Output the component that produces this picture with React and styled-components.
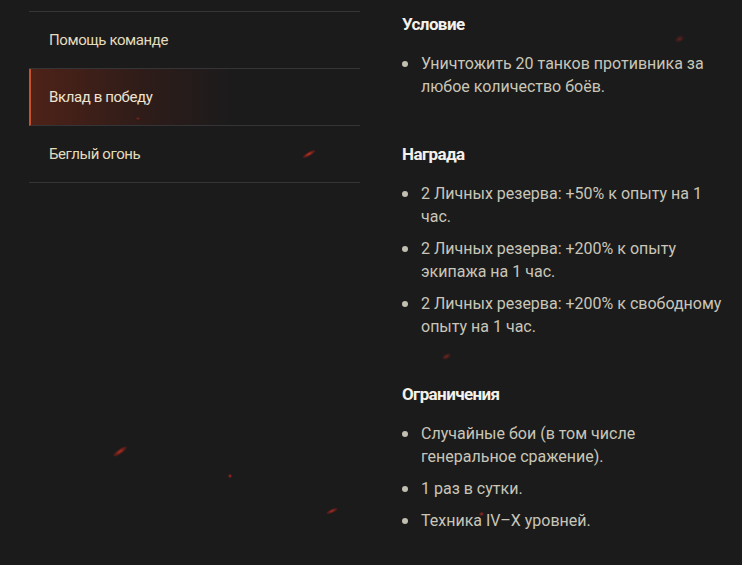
import React from "react";
import styled, { createGlobalStyle } from "styled-components";

const Global = createGlobalStyle`
  html, body { margin: 0; padding: 0; background: #1b1b1c; }
  body { width: 742px; height: 565px; overflow: hidden; font-family: Roboto, "Liberation Sans", sans-serif; }
`;

const Page = styled.div`
  position: relative;
  width: 742px;
  height: 565px;
  background: #1b1b1c;
  display: flex;
  overflow: hidden;
`;

const Nav = styled.nav`
  width: 331px;
  margin: 11px 0 0 29px;
  display: flex;
  flex-direction: column;
  align-self: flex-start;
  border-top: 1px solid #353537;
`;

const NavItem = styled.div`
  height: 56px;
  display: flex;
  align-items: center;
  padding-left: ${p => (p.$active ? "18px" : "20px")};
  border-bottom: 1px solid #353537;
  border-left: ${p => (p.$active ? "2px solid #c7512c" : "none")};
  background: ${p =>
    p.$active
      ? "linear-gradient(90deg, rgba(120,40,20,0.55) 0%, rgba(80,30,20,0.35) 35%, rgba(27,27,28,0) 62%)"
      : "transparent"};
  color: ${p => (p.$active ? "#efe3d2" : "#e3dcbc")};
  font-size: 15px;
  letter-spacing: -0.4px;
`;

const Content = styled.main`
  margin-left: 42px;
  padding-top: 12px;
  display: flex;
  flex-direction: column;
`;

const Section = styled.section`
  margin-bottom: 44px;
`;

const Heading = styled.h3`
  margin: 0 0 16px 0;
  font-size: 17px;
  font-weight: 700;
  line-height: 24px;
  color: #f4f1ea;
  letter-spacing: -0.6px;
`;

const List = styled.ul`
  margin: 0;
  padding: 0;
  list-style: none;
  display: flex;
  flex-direction: column;
  gap: 9px;
`;

const Item = styled.li`
  position: relative;
  padding-left: 19px;
  font-size: 16px;
  line-height: 23px;
  color: #c9c6b8;
  width: 305px;
  &::before {
    content: "";
    position: absolute;
    left: 0;
    top: 9px;
    width: 6px;
    height: 6px;
    border-radius: 50%;
    background: #c2beb0;
  }
`;

const Spark = styled.div`
  position: absolute;
  border-radius: 50%;
  background: radial-gradient(ellipse at center, rgba(230,60,40,0.9) 0%, rgba(180,30,20,0.5) 50%, rgba(150,20,10,0) 100%);
  pointer-events: none;
`;

const sparks = [
  { x: 302, y: 152, w: 14, h: 4, r: -30, o: 0.9 },
  { x: 112, y: 449, w: 16, h: 5, r: -35, o: 0.8 },
  { x: 326, y: 509, w: 12, h: 4, r: -25, o: 0.75 },
  { x: 228, y: 474, w: 4, h: 4, r: 0, o: 0.8 },
  { x: 675, y: 36, w: 9, h: 6, r: -30, o: 0.35 },
  { x: 442, y: 354, w: 9, h: 5, r: -30, o: 0.45 },
  { x: 136, y: 117, w: 4, h: 3, r: 0, o: 0.5 },
  { x: 479, y: 512, w: 5, h: 4, r: -20, o: 0.7 },
];

const sections = [
  { title: "Условие", items: ["Уничтожить 20 танков противника за любое количество боёв."] },
  {
    title: "Награда",
    items: [
      "2 Личных резерва: +50% к опыту на 1 час.",
      "2 Личных резерва: +200% к опыту экипажа на 1 час.",
      "2 Личных резерва: +200% к свободному опыту на 1 час.",
    ],
  },
  {
    title: "Ограничения",
    items: ["Случайные бои (в том числе генеральное сражение).", "1 раз в сутки.", "Техника IV–X уровней."],
  },
];

export default function App() {
  return (
    <>
      <Global />
      <Page>
        <Nav>
          <NavItem>Помощь команде</NavItem>
          <NavItem $active>Вклад в победу</NavItem>
          <NavItem>Беглый огонь</NavItem>
        </Nav>
        <Content>
          {sections.map(s => (
            <Section key={s.title}>
              <Heading>{s.title}</Heading>
              <List>
                {s.items.map(i => (
                  <Item key={i}>{i}</Item>
                ))}
              </List>
            </Section>
          ))}
        </Content>
        {sparks.map((s, i) => (
          <Spark
            key={i}
            style={{ left: s.x, top: s.y, width: s.w, height: s.h, opacity: s.o, transform: `rotate(${s.r}deg)` }}
          />
        ))}
      </Page>
    </>
  );
}
